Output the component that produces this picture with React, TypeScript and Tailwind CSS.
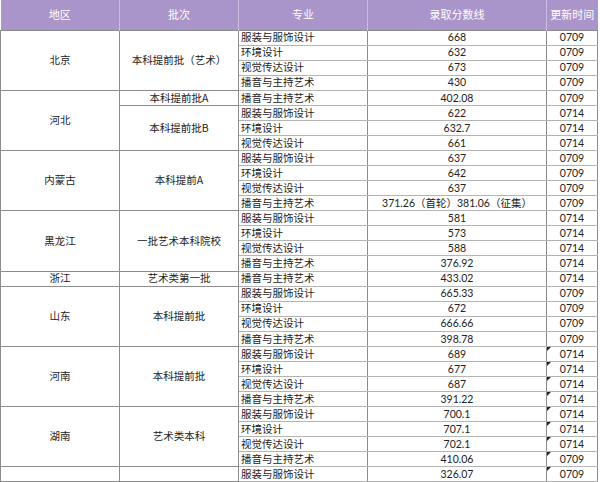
import React from "react";

type Row = [string, string, string];
type Batch = { name: string; rows: Row[] };
type Group = { region: string; batches: Batch[]; mark?: boolean };

const groups: Group[] = [
  {
    region: "北京",
    batches: [
      {
        name: "本科提前批（艺术）",
        rows: [
          ["服装与服饰设计", "668", "0709"],
          ["环境设计", "632", "0709"],
          ["视觉传达设计", "673", "0709"],
          ["播音与主持艺术", "430", "0709"],
        ],
      },
    ],
  },
  {
    region: "河北",
    batches: [
      { name: "本科提前批A", rows: [["播音与主持艺术", "402.08", "0709"]] },
      {
        name: "本科提前批B",
        rows: [
          ["服装与服饰设计", "622", "0714"],
          ["环境设计", "632.7", "0714"],
          ["视觉传达设计", "661", "0714"],
        ],
      },
    ],
  },
  {
    region: "内蒙古",
    batches: [
      {
        name: "本科提前A",
        rows: [
          ["服装与服饰设计", "637", "0709"],
          ["环境设计", "642", "0709"],
          ["视觉传达设计", "637", "0709"],
          ["播音与主持艺术", "371.26（首轮）381.06（征集）", "0709"],
        ],
      },
    ],
  },
  {
    region: "黑龙江",
    batches: [
      {
        name: "一批艺术本科院校",
        rows: [
          ["服装与服饰设计", "581", "0714"],
          ["环境设计", "573", "0714"],
          ["视觉传达设计", "588", "0714"],
          ["播音与主持艺术", "376.92", "0714"],
        ],
      },
    ],
  },
  {
    region: "浙江",
    batches: [{ name: "艺术类第一批", rows: [["播音与主持艺术", "433.02", "0714"]] }],
  },
  {
    region: "山东",
    batches: [
      {
        name: "本科提前批",
        rows: [
          ["服装与服饰设计", "665.33", "0709"],
          ["环境设计", "672", "0709"],
          ["视觉传达设计", "666.66", "0709"],
          ["播音与主持艺术", "398.78", "0709"],
        ],
      },
    ],
  },
  {
    region: "河南",
    mark: true,
    batches: [
      {
        name: "本科提前批",
        rows: [
          ["服装与服饰设计", "689", "0714"],
          ["环境设计", "677", "0714"],
          ["视觉传达设计", "687", "0714"],
          ["播音与主持艺术", "391.22", "0714"],
        ],
      },
    ],
  },
  {
    region: "湖南",
    mark: true,
    batches: [
      {
        name: "艺术类本科",
        rows: [
          ["服装与服饰设计", "700.1", "0714"],
          ["环境设计", "707.1", "0714"],
          ["视觉传达设计", "702.1", "0714"],
          ["播音与主持艺术", "410.06", "0709"],
        ],
      },
    ],
  },
  {
    region: "",
    mark: true,
    batches: [{ name: "", rows: [["服装与服饰设计", "326.07", "0709"]] }],
  },
];

const numFont = { fontFamily: "Lato, 'Noto Sans CJK SC', sans-serif" };

export default function App() {
  const body: React.ReactNode[] = [];
  groups.forEach((g, gi) => {
    const total = g.batches.reduce((s, b) => s + b.rows.length, 0);
    let first = true;
    g.batches.forEach((b, bi) => {
      b.rows.forEach((r, ri) => {
        const groupTop = first;
        const batchTop = ri === 0;
        body.push(
          <tr key={`${gi}-${bi}-${ri}`} className="h-[15.07px]">
            {groupTop && (
              <td
                rowSpan={total}
                className="border border-[#8c8c8c] text-center align-middle"
              >
                {g.region}
              </td>
            )}
            {batchTop && (
              <td
                rowSpan={b.rows.length}
                className={`border border-[#8c8c8c] text-center align-middle ${
                  groupTop ? "" : "border-t-[#a8a8a8]"
                }`}
              >
                {b.name}
              </td>
            )}
            <td
              className={`border border-x-[#8c8c8c] pl-[2px] text-left whitespace-nowrap ${
                groupTop ? "border-t-[#8c8c8c]" : "border-t-[#b4b4b4]"
              } border-b-[#b4b4b4]`}
            >
              {r[0]}
            </td>
            <td
              className={`border border-x-[#8c8c8c] text-center whitespace-nowrap ${
                groupTop ? "border-t-[#8c8c8c]" : "border-t-[#b4b4b4]"
              } border-b-[#b4b4b4]`}
              style={numFont}
            >
              {r[1]}
            </td>
            <td
              className={`relative border border-x-[#8c8c8c] text-center ${
                groupTop ? "border-t-[#8c8c8c]" : "border-t-[#b4b4b4]"
              } border-b-[#b4b4b4]`}
              style={numFont}
            >
              {g.mark && (
                <span className="absolute left-0 top-0 h-0 w-0 border-t-[4px] border-r-[4px] border-t-[#222] border-r-transparent" />
              )}
              {r[2]}
            </td>
          </tr>
        );
        first = false;
      });
    });
  });

  return (
    <div
      className="h-[482px] w-[600px] overflow-hidden bg-white text-[#222]"
      style={{ fontFamily: "'Noto Sans CJK SC', sans-serif" }}
    >
      <table className="w-[597px] table-fixed border-collapse text-[10.5px] leading-none">
        <colgroup>
          <col className="w-[119px]" />
          <col className="w-[119px]" />
          <col className="w-[129px]" />
          <col className="w-[179px]" />
          <col className="w-[51px]" />
        </colgroup>
        <thead>
          <tr className="h-[30px] bg-[#a995c9] text-[11px] text-white">
            <th className="border-r border-[#c9bde0] font-normal">地区</th>
            <th className="border-r border-[#c9bde0] font-normal">批次</th>
            <th className="border-r border-[#c9bde0] font-normal">专业</th>
            <th className="border-r border-[#c9bde0] font-normal">录取分数线</th>
            <th className="font-normal">更新时间</th>
          </tr>
        </thead>
        <tbody>{body}</tbody>
      </table>
    </div>
  );
}
